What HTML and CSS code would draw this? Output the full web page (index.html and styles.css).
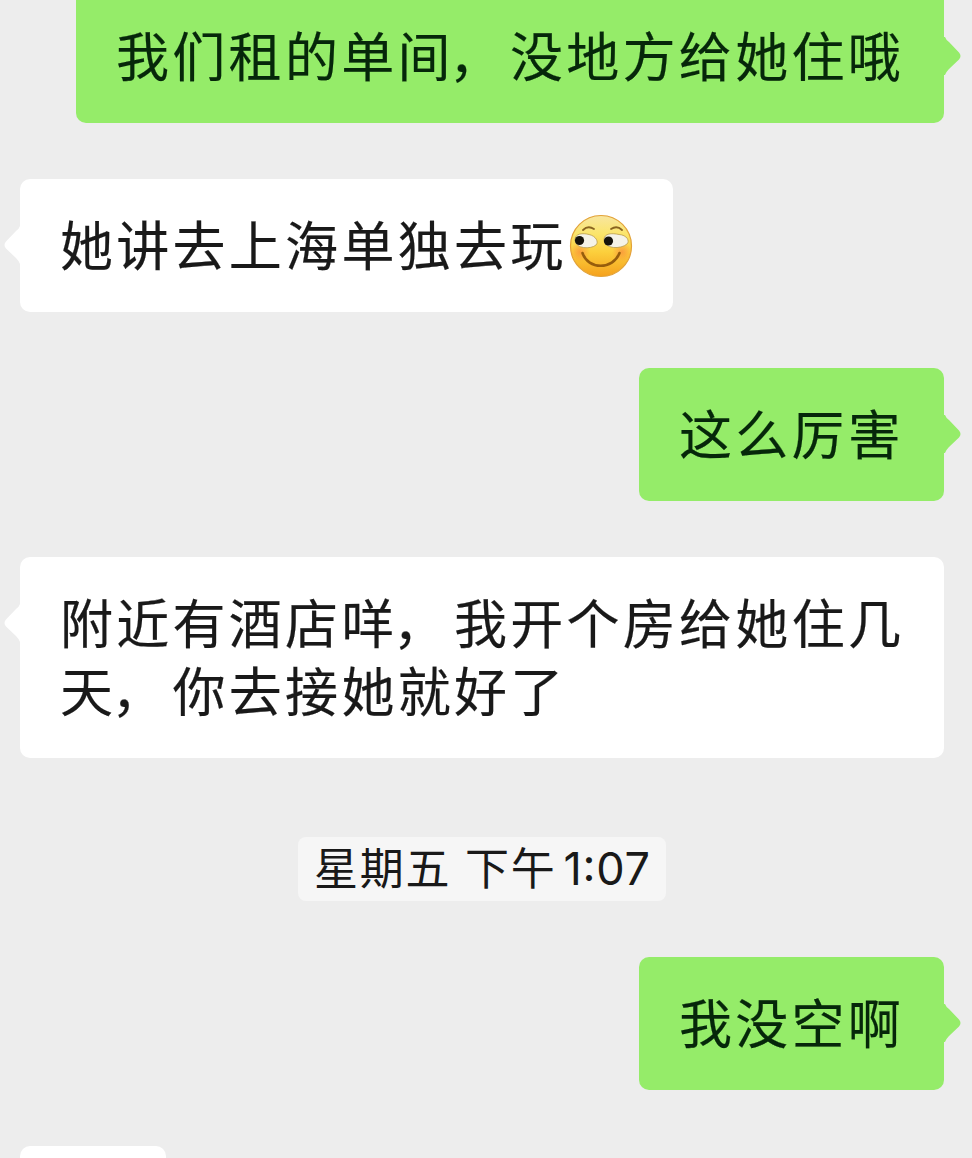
FILE: index.html
```
<!DOCTYPE html>
<html lang="zh-CN">
<head>
    <meta charset="UTF-8">
    <meta name="viewport" content="width=device-width, initial-scale=1.0">
    <title>聊天</title>
    <link rel="stylesheet" href="styles.css">
</head>
<body>
    <div class="chat">
        <div class="message sent">
            <div class="bubble">我们租的单间<span class="comma">，</span>没地方给她住哦<svg class="tail" viewBox="0 0 17 38"><path d="M0 0L1 0Q2 3 5 5L15 15.500Q18 19 15 22.500L5 32Q2 35 1 38L0 38Z"/></svg></div>
        </div>
        <div class="message received">
            <div class="bubble"><svg class="tail" viewBox="0 0 17 38"><path d="M0 0L1 0Q2 3 5 5L15 15.500Q18 19 15 22.500L5 32Q2 35 1 38L0 38Z"/></svg>她讲去上海单独去玩<svg class="emoji" viewBox="0 0 64 64">
                    <defs>
                        <linearGradient id="face" x1="0" y1="0" x2="0" y2="1">
                            <stop offset="0" stop-color="#f8e6a0"/>
                            <stop offset="0.3" stop-color="#fbe56b"/>
                            <stop offset="0.6" stop-color="#fccf3c"/>
                            <stop offset="1" stop-color="#f5a11d"/>
                        </linearGradient>
                        <radialGradient id="blush">
                            <stop offset="0" stop-color="#f98a3c" stop-opacity="0.7"/>
                            <stop offset="1" stop-color="#f98a3c" stop-opacity="0"/>
                        </radialGradient>
                    </defs>
                    <circle cx="32" cy="32" r="30.500" fill="url(#face)" stroke="#e2a238" stroke-width="1.200"/>
                    <circle cx="11" cy="38" r="10" fill="url(#blush)"/>
                    <circle cx="53" cy="38" r="10" fill="url(#blush)"/>
                    <path d="M14 16Q19 11 25 15M42 15Q48 11 53 16" fill="none" stroke="#8a6420" stroke-width="1.800" stroke-linecap="round"/>
                    <path d="M6 26C6 19 14 19 20 20.500C27 22 30 28 27 31C22 35.500 6 35 6 26Z" fill="#f5f3e8" stroke="#b79a4c" stroke-width="0.800"/>
                    <path d="M35 26C35 19 43 19 50 20.500C58 21 61 27 58 30C52 35.500 35 35 35 26Z" fill="#f5f3e8" stroke="#b79a4c" stroke-width="0.800"/>
                    <circle cx="10.500" cy="26.500" r="4.600" fill="#15120c"/>
                    <circle cx="39.500" cy="27" r="4.600" fill="#15120c"/>
                    <path d="M13.500 39C19 56 44 56 50.500 39" fill="none" stroke="#975d0c" stroke-width="2.600" stroke-linecap="round"/>
                </svg></div>
        </div>
        <div class="message sent">
            <div class="bubble">这么厉害<svg class="tail" viewBox="0 0 17 38"><path d="M0 0L1 0Q2 3 5 5L15 15.500Q18 19 15 22.500L5 32Q2 35 1 38L0 38Z"/></svg></div>
        </div>
        <div class="message received">
            <div class="bubble"><svg class="tail" viewBox="0 0 17 38"><path d="M0 0L1 0Q2 3 5 5L15 15.500Q18 19 15 22.500L5 32Q2 35 1 38L0 38Z"/></svg>附近有酒店咩<span class="comma">，</span>我开个房给她住几<br>天<span class="comma">，</span>你去接她就好了</div>
        </div>
        <div class="timestamp">
            <span>星期五</span>
            <span>下午</span>
            <span class="clock">1:07</span>
        </div>
        <div class="message sent">
            <div class="bubble">我没空啊<svg class="tail" viewBox="0 0 17 38"><path d="M0 0L1 0Q2 3 5 5L15 15.500Q18 19 15 22.500L5 32Q2 35 1 38L0 38Z"/></svg></div>
        </div>
        <div class="message received next">
            <div class="bubble"></div>
        </div>
    </div>
</body>
</html>
```
FILE: styles.css
```
* {
    box-sizing: border-box;
}
body {
    margin: 0;
    height: 100vh;
    overflow: hidden;
    background: #ededed;
    color: #191919;
    font-family: "Noto Sans CJK SC", sans-serif;
}
/* the list is scrolled a little, so the first bubble is cut at the top */
.chat {
    display: flex;
    flex-direction: column;
    gap: 56px;
    height: calc(100vh + 10px);
    margin-top: -10px;
    padding: 0 28px 0 20px;
    overflow: hidden;
}
.message {
    display: flex;
    flex-shrink: 0;
}
.sent {
    justify-content: flex-end;
}
.bubble {
    position: relative;
    padding: 30px 40px 35px;
    border-radius: 10px;
    background: #fff;
    font-size: 53px;
    line-height: 68px;
    letter-spacing: 3.280px;
    white-space: nowrap;
    -webkit-text-stroke: 0.2px;
}
.sent .bubble {
    background: #95ec69;
    color: #06270a;
}
/* only the top of this one is in view */
.next {
    flex: 1;
    min-height: 0;
}
.next .bubble {
    width: 146px;
    padding: 0;
    border-radius: 10px 10px 0 0;
}
.comma {
    margin: 0 5px 0 -5px;
}
.tail {
    position: absolute;
    top: 47px;
    right: -17px;
    width: 17px;
    height: 38px;
    fill: #95ec69;
}
.received .tail {
    right: auto;
    left: -16px;
    fill: #fff;
    transform: scaleX(-1);
}
.emoji {
    width: 64px;
    height: 64px;
    margin: -8px 0 -8px 2px;
    vertical-align: -4px;
}
.timestamp {
    display: flex;
    flex-shrink: 0;
    align-self: center;
    gap: 14px;
    width: 368px;
    height: 64px;
    margin-top: 23px;
    padding: 0 15px 0 16px;
    border-radius: 8px;
    background: #f6f6f6;
    font-size: 44px;
    line-height: 59px;
    letter-spacing: 1.700px;
}
.clock {
    margin-left: -7px;
    font-family: Inter, sans-serif;
    font-size: 45px;
    line-height: 64px;
    letter-spacing: 0.700px;
    font-feature-settings: "case";
}
```
